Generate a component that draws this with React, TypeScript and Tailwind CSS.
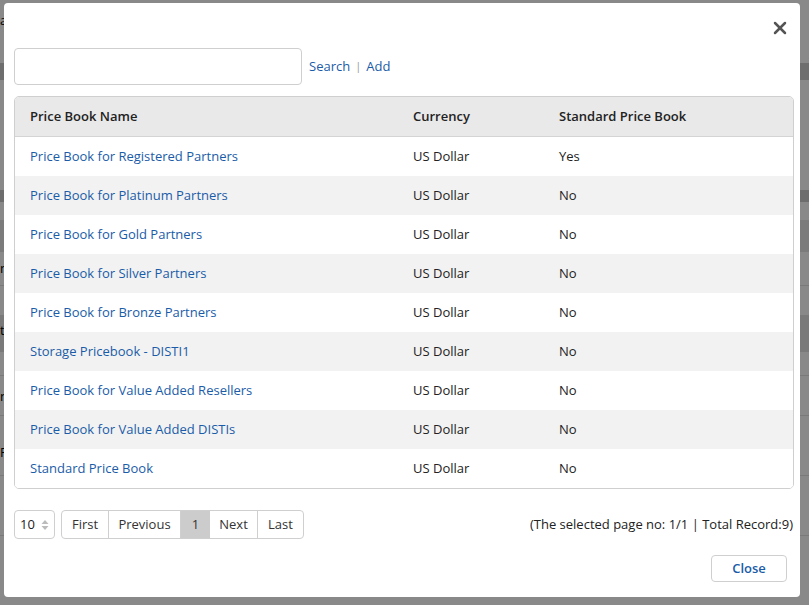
import { X } from "lucide-react"

const rows = [
  { name: "Price Book for Registered Partners", currency: "US Dollar", standard: "Yes" },
  { name: "Price Book for Platinum Partners", currency: "US Dollar", standard: "No" },
  { name: "Price Book for Gold Partners", currency: "US Dollar", standard: "No" },
  { name: "Price Book for Silver Partners", currency: "US Dollar", standard: "No" },
  { name: "Price Book for Bronze Partners", currency: "US Dollar", standard: "No" },
  { name: "Storage Pricebook - DISTI1", currency: "US Dollar", standard: "No" },
  { name: "Price Book for Value Added Resellers", currency: "US Dollar", standard: "No" },
  { name: "Price Book for Value Added DISTIs", currency: "US Dollar", standard: "No" },
  { name: "Standard Price Book", currency: "US Dollar", standard: "No" },
]

function Backdrop() {
  // faded page behind the modal, only the edges show
  return (
    <div className="flex flex-col text-[13px] text-black">
      <div className="h-[63px] px-0 pt-[14px] leading-none">a</div>
      <div className="h-[17px] bg-[#6e6e6e]" />
      <div className="h-[110px]" />
      <div className="h-[12px] bg-[#6d6d6d]" />
      <div className="h-[18px]" />
      <div className="h-[32px] bg-[#7b7b7b]" />
      <div className="h-[34px] border-b border-[#7a7a7a] pt-[10px] leading-none">m</div>
      <div className="h-[30px] border-b border-[#7a7a7a]" />
      <div className="h-[36px] bg-[#7a7a7a] pt-[8px] leading-none">t</div>
      <div className="h-[24px] border-b border-[#7a7a7a]" />
      <div className="h-[40px] border-b border-[#7a7a7a] pt-[14px] leading-none">n</div>
      <div className="h-[60px] border-b border-[#7a7a7a] pt-[30px] leading-none">P</div>
      <div className="h-[60px] border-b border-[#7a7a7a]" />
    </div>
  )
}

export default function App() {
  return (
    <div className="relative h-[605px] w-[809px] overflow-hidden bg-[#898989] font-['Open_Sans',sans-serif]">
      <Backdrop />

      <div className="absolute left-[4px] top-[3px] flex h-[594px] w-[796px] flex-col rounded-[4px] bg-white pl-[10px] pr-[6px] text-[13px] text-[#222]">
        <div className="flex h-[45px] items-start justify-end pt-[15px] pr-[4px]">
          <X className="h-[20px] w-[20px] text-[#555]" strokeWidth={3} />
        </div>

        <div className="flex items-center">
          <input className="h-[37px] w-[288px] rounded-[4px] border border-[#cfcfcf] outline-none" />
          <div className="ml-[7px] flex items-center text-[#1a5ca8]">
            <span>Search</span>
            <span className="mx-[5px] text-[11px] text-[#999]">|</span>
            <span>Add</span>
          </div>
        </div>

        <div className="mt-[11px] overflow-hidden rounded-[5px] border border-[#cfcfcf]">
          <div className="grid h-[40px] grid-cols-[383px_146px_1fr] items-center border-b border-[#d4d4d4] bg-[#e9e9e9] font-semibold">
            <div className="pl-[15px]">Price Book Name</div>
            <div className="pl-[15px]">Currency</div>
            <div className="pl-[15px]">Standard Price Book</div>
          </div>
          {rows.map((r, i) => (
            <div
              key={r.name}
              className={`grid h-[39px] grid-cols-[383px_146px_1fr] items-center ${i % 2 === 1 ? "bg-[#f2f2f2]" : "bg-white"}`}
            >
              <div className="pl-[15px] text-[#1a5ca8]">{r.name}</div>
              <div className="pl-[15px]">{r.currency}</div>
              <div className="pl-[15px]">{r.standard}</div>
            </div>
          ))}
        </div>

        <div className="mt-[21px] flex items-center">
          <div className="flex h-[29px] w-[41px] items-center justify-between rounded-[4px] border border-[#cfcfcf] pl-[5px] pr-[5px]">
            <span>10</span>
            <svg width="8" height="12" viewBox="0 0 8 12" className="text-[#bbb]">
              <path d="M4 1 L7.5 5 H0.5 Z" fill="currentColor" />
              <path d="M4 11 L7.5 7 H0.5 Z" fill="currentColor" />
            </svg>
          </div>
          <div className="ml-[6px] flex h-[29px] overflow-hidden rounded-[4px] border border-[#cfcfcf] text-[#333]">
            <div className="flex w-[47px] items-center justify-center border-r border-[#cfcfcf]">First</div>
            <div className="flex w-[72px] items-center justify-center border-r border-[#cfcfcf]">Previous</div>
            <div className="flex w-[29px] items-center justify-center bg-[#cccccc]">1</div>
            <div className="flex w-[48px] items-center justify-center border-r border-[#cfcfcf]">Next</div>
            <div className="flex w-[45px] items-center justify-center">Last</div>
          </div>
          <div className="ml-auto pr-[1px]">(The selected page no: 1/1 | Total Record:9)</div>
        </div>

        <div className="mt-[16px] flex justify-end pr-[7px]">
          <button className="h-[27px] w-[76px] rounded-[4px] border border-[#cfcfcf] bg-white font-semibold text-[#1a5ca8]">
            Close
          </button>
        </div>
      </div>
    </div>
  )
}
